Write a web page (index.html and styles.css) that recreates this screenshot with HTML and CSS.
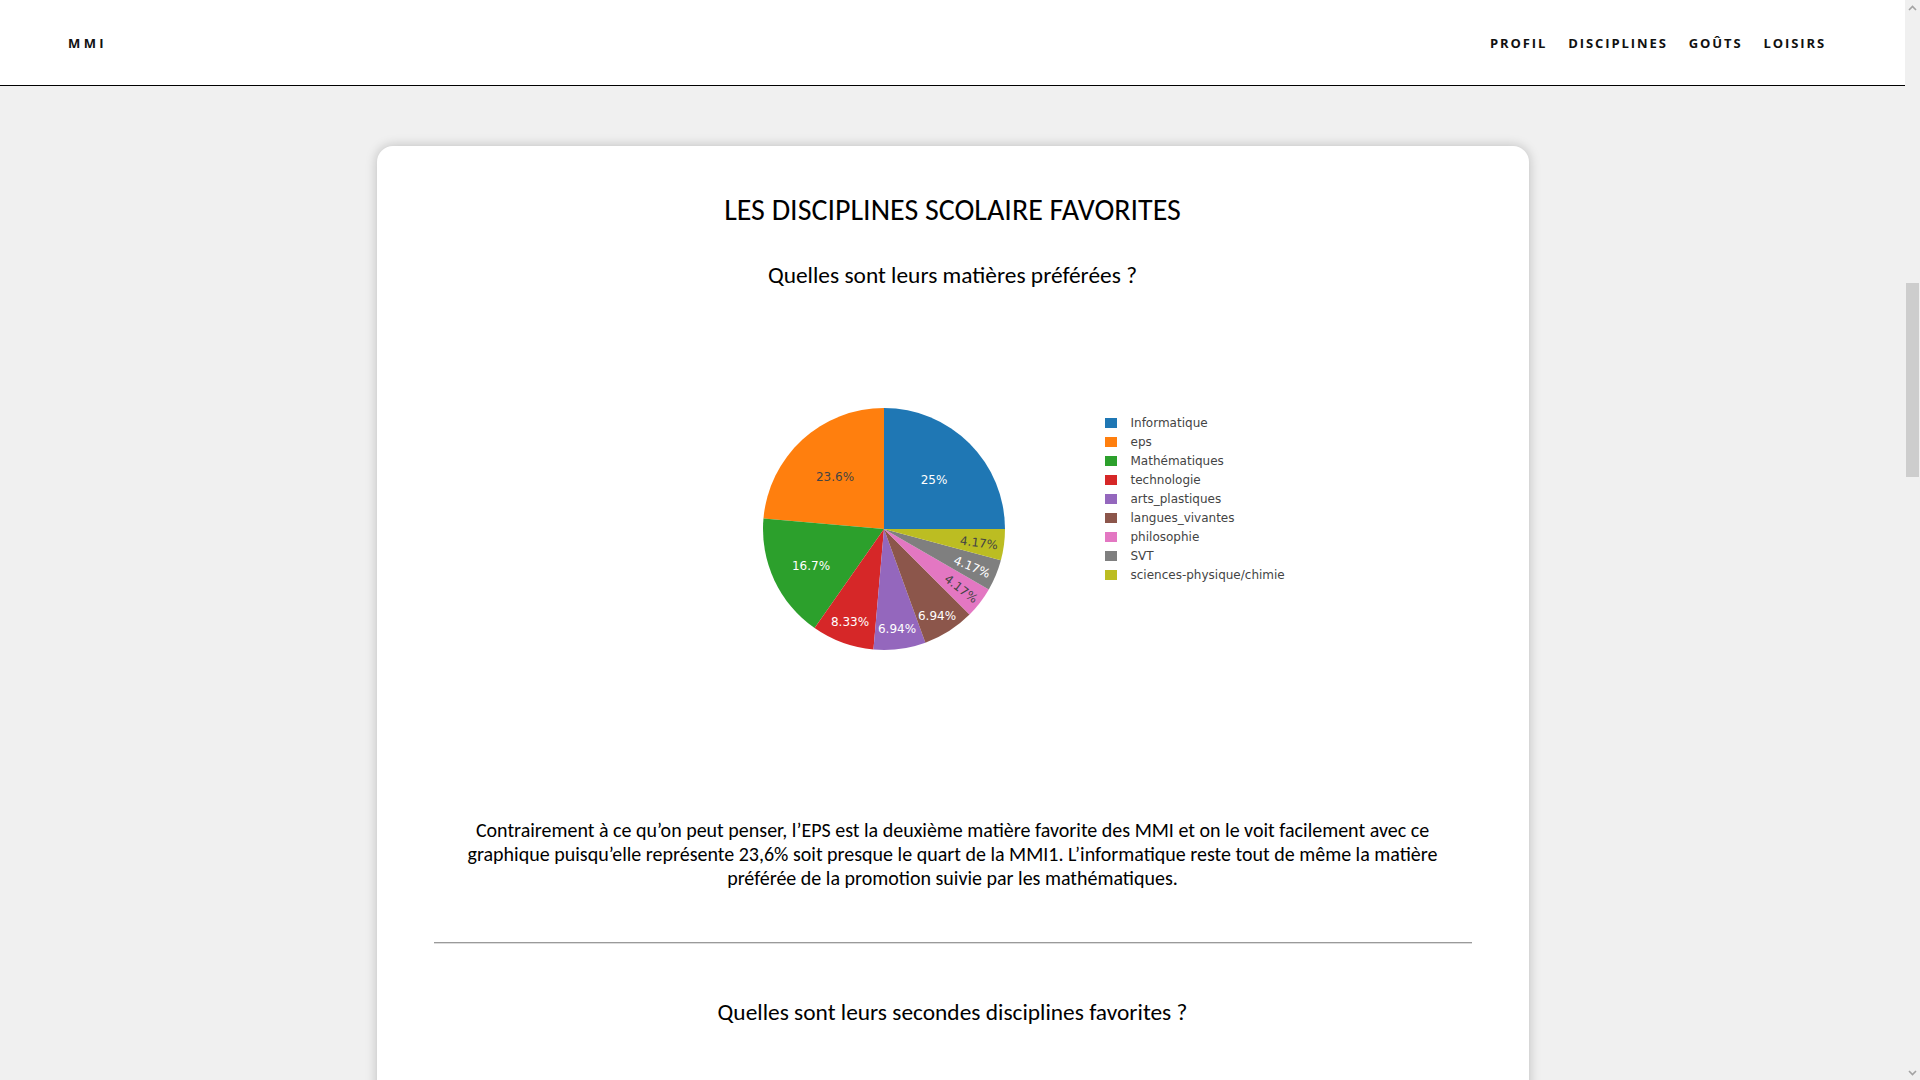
FILE: index.html
```html
<!DOCTYPE html>
<html lang="fr">
<head>
<meta charset="utf-8">
<title>MMI - Disciplines</title>
<link rel="stylesheet" href="styles.css">
</head>
<body>
<div class="window">
  <div class="page">
    <header class="topbar">
      <a class="brand" href="#">MMI</a>
      <nav class="menu">
        <a href="#">Profil</a>
        <a href="#">Disciplines</a>
        <a href="#">Goûts</a>
        <a href="#">Loisirs</a>
      </nav>
    </header>
    <main class="content">
      <section class="card">
        <h1 class="card-title">LES DISCIPLINES SCOLAIRE FAVORITES</h1>
        <h2 class="question">Quelles sont leurs matières préférées ?</h2>
        <svg class="chart" width="1038" height="450" viewBox="0 0 1038 450">
          <g class="slices">
            <path fill="#1f77b4" d="M450,230 L571,230 A121,121 0 0 0 450,109 Z"/>
            <path fill="#ff7f0e" d="M450,230 L450,109 A121,121 0 0 0 329.46,219.45 Z"/>
            <path fill="#2ca02c" d="M450,230 L329.46,219.45 A121,121 0 0 0 380.60,329.12 Z"/>
            <path fill="#d62728" d="M450,230 L380.60,329.12 A121,121 0 0 0 439.45,350.54 Z"/>
            <path fill="#9467bd" d="M450,230 L439.45,350.54 A121,121 0 0 0 491.38,343.70 Z"/>
            <path fill="#8c564b" d="M450,230 L491.38,343.70 A121,121 0 0 0 535.56,315.56 Z"/>
            <path fill="#e377c2" d="M450,230 L535.56,315.56 A121,121 0 0 0 554.79,290.50 Z"/>
            <path fill="#7f7f7f" d="M450,230 L554.79,290.50 A121,121 0 0 0 566.88,261.32 Z"/>
            <path fill="#bcbd22" d="M450,230 L566.88,261.32 A121,121 0 0 0 571,230 Z"/>
          </g>
          <g class="slice-labels">
            <text class="lbl light" x="500" y="181">25%</text>
            <text class="lbl dark" x="401" y="178">23.6%</text>
            <text class="lbl light" x="377" y="267">16.7%</text>
            <text class="lbl light" x="416" y="323">8.33%</text>
            <text class="lbl light" x="463" y="330">6.94%</text>
            <text class="lbl light" x="503" y="317">6.94%</text>
            <text class="lbl dark" x="527" y="290" transform="rotate(37.5 527 290)">4.17%</text>
            <text class="lbl light" x="538" y="268" transform="rotate(22.5 538 268)">4.17%</text>
            <text class="lbl dark" x="545" y="244" transform="rotate(7.5 545 244)">4.17%</text>
          </g>
          <g class="legend">
            <rect x="671" y="119" width="12" height="10" fill="#1f77b4"/>
            <text class="leg" x="696.5" y="124.2">Informatique</text>
            <rect x="671" y="138" width="12" height="10" fill="#ff7f0e"/>
            <text class="leg" x="696.5" y="143.2">eps</text>
            <rect x="671" y="157" width="12" height="10" fill="#2ca02c"/>
            <text class="leg" x="696.5" y="162.2">Mathématiques</text>
            <rect x="671" y="176" width="12" height="10" fill="#d62728"/>
            <text class="leg" x="696.5" y="181.2">technologie</text>
            <rect x="671" y="195" width="12" height="10" fill="#9467bd"/>
            <text class="leg" x="696.5" y="200.2">arts_plastiques</text>
            <rect x="671" y="214" width="12" height="10" fill="#8c564b"/>
            <text class="leg" x="696.5" y="219.2">langues_vivantes</text>
            <rect x="671" y="233" width="12" height="10" fill="#e377c2"/>
            <text class="leg" x="696.5" y="238.2">philosophie</text>
            <rect x="671" y="252" width="12" height="10" fill="#7f7f7f"/>
            <text class="leg" x="696.5" y="257.2">SVT</text>
            <rect x="671" y="271" width="12" height="10" fill="#bcbd22"/>
            <text class="leg" x="696.5" y="276.2">sciences-physique/chimie</text>
          </g>
        </svg>
        <p class="comment">Contrairement à ce qu’on peut penser, l’EPS est la deuxième matière favorite des MMI et on le voit facilement avec ce graphique puisqu’elle représente 23,6% soit presque le quart de la MMI1. L’informatique reste tout de même la matière préférée de la promotion suivie par les mathématiques.</p>
        <hr class="divider">
        <h2 class="question second">Quelles sont leurs secondes disciplines favorites ?</h2>
        <div class="chart-space"></div>
      </section>
    </main>
  </div>
  <div class="scrollbar">
    <div class="sb-arrow">
      <svg width="9" height="6" viewBox="0 0 9 6"><path d="M1,5 L4.5,1.5 L8,5" fill="none" stroke="#a3a3a3" stroke-width="1.6"/></svg>
    </div>
    <div class="sb-track"><div class="sb-thumb"></div></div>
    <div class="sb-arrow">
      <svg width="9" height="6" viewBox="0 0 9 6"><path d="M1,1 L4.5,4.5 L8,1" fill="none" stroke="#a3a3a3" stroke-width="1.6"/></svg>
    </div>
  </div>
</div>
</body>
</html>
```
FILE: styles.css
```css
html, body {
  margin: 0;
  padding: 0;
  height: 1080px;
  overflow: hidden;
}

body {
  background: #f0f0f0;
  font-family: "Carlito", "Open Sans", "Liberation Sans", sans-serif;
  color: #000;
}

.window {
  display: flex;
  height: 1080px;
}

.page {
  flex: 1;
  min-width: 0;
  overflow: hidden;
  display: flex;
  flex-direction: column;
}

.topbar {
  flex: none;
  height: 86px;
  box-sizing: border-box;
  background: #fff;
  border-bottom: 1px solid #000;
  display: flex;
  align-items: center;
  justify-content: space-between;
  padding: 1px 79px 0 68px;
}

.brand,
.menu a {
  font-family: "Open Sans", "Liberation Sans", sans-serif;
  font-weight: 700;
  font-size: 13px;
  letter-spacing: 1.9px;
  color: #111;
  text-decoration: none;
  text-transform: uppercase;
}

.brand {
  letter-spacing: 3.4px;
}

.menu {
  display: flex;
  gap: 21px;
}

.content {
  flex: 1;
  padding-top: 60px;
}

.card {
  width: 1152px;
  box-sizing: border-box;
  margin: 0 auto;
  padding: 46px 57px 0;
  background: #fff;
  border-radius: 16px;
  box-shadow: 0 0 12px rgba(0, 0, 0, 0.22);
  min-height: 1200px;
}

.card-title {
  margin: 0;
  font-size: 30px;
  line-height: 36px;
  font-weight: 400;
  text-align: center;
}

.question {
  margin: 33px 0 0;
  font-size: 23.4px;
  line-height: 28px;
  font-weight: 400;
  text-align: center;
}

.question.second {
  margin-top: 54px;
}

.chart {
  display: block;
  margin-top: 10px;
}

.lbl {
  font-family: "DejaVu Sans", Verdana, sans-serif;
  font-size: 12px;
  text-anchor: middle;
  dominant-baseline: central;
}

.lbl.light { fill: #ffffff; }
.lbl.dark { fill: #444444; }

.leg {
  font-family: "DejaVu Sans", Verdana, sans-serif;
  font-size: 12px;
  fill: #444444;
  dominant-baseline: central;
}

.comment {
  margin: 69px 0 0;
  font-size: 20px;
  line-height: 24px;
  text-align: center;
}

.divider {
  margin: 52px 0 0;
  height: 0;
  border: 0;
  border-top: 1px solid #9a9a9a;
  border-bottom: 1px solid #dcdcdc;
}

.chart-space {
  height: 450px;
}

.scrollbar {
  flex: none;
  width: 15px;
  background: #f0f0f0;
  display: flex;
  flex-direction: column;
}

.sb-arrow {
  height: 15px;
  display: flex;
  align-items: center;
  justify-content: center;
}

.sb-track {
  flex: 1;
  padding-top: 268px;
}

.sb-thumb {
  height: 194px;
  margin: 0 1px;
  background: #cdcdcd;
}
```
